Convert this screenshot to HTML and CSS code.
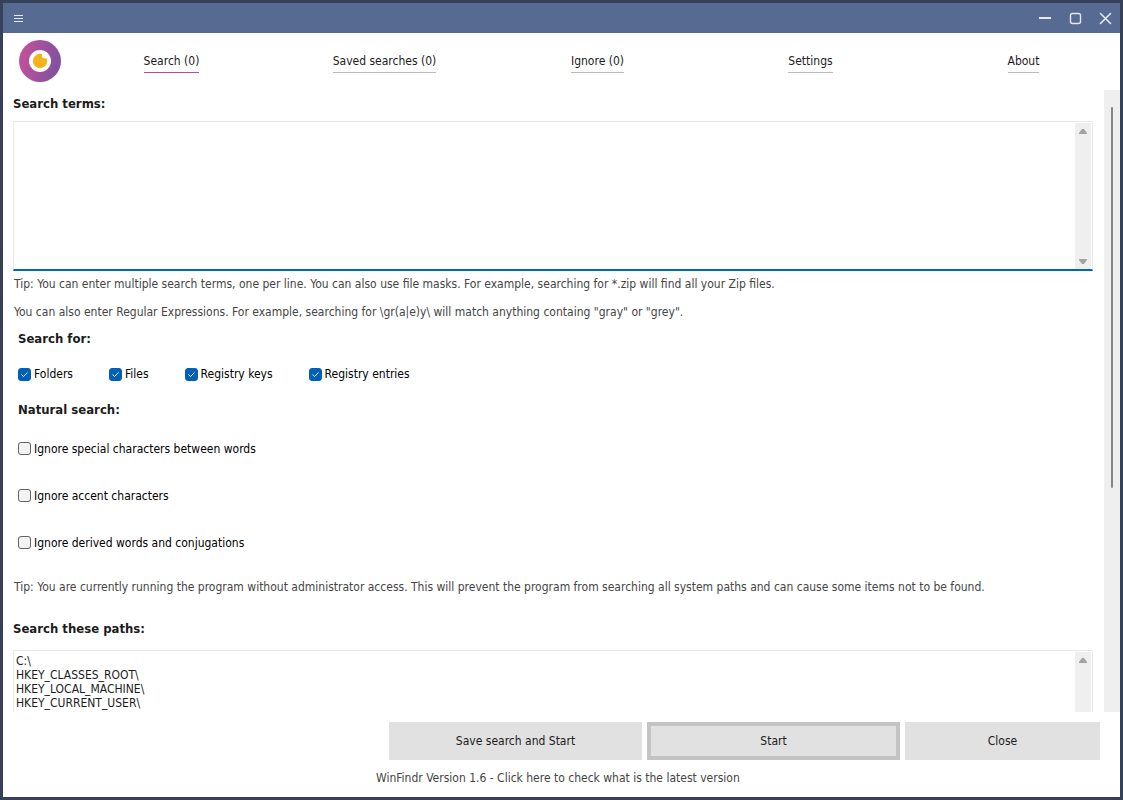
FILE: index.html
```html
<!DOCTYPE html>
<html lang="en">
<head>
<meta charset="utf-8">
<title>WinFindr</title>
<link rel="stylesheet" href="styles.css">
</head>
<body>
<div class="window">
  <div class="titlebar">
    <button class="title-button" aria-label="Menu"><svg width="30" height="30" viewBox="0 0 30 30"><path d="M11 12.5h9M11 15.5h9M11 18.5h9" stroke="#e4e8ef"/></svg></button>
    <div class="window-controls">
      <button class="title-button" aria-label="Minimize"><svg width="30" height="30" viewBox="0 0 30 30"><path d="M9 15h12" stroke="#e4e8ef" stroke-width="2"/></svg></button>
      <button class="title-button" aria-label="Maximize"><svg width="30" height="30" viewBox="0 0 30 30"><rect x="10.5" y="10.5" width="10" height="10" rx="2" fill="none" stroke="#e4e8ef" stroke-width="1.4"/></svg></button>
      <button class="title-button" aria-label="Close window"><svg width="30" height="30" viewBox="0 0 30 30"><path d="M10.500 10.500l10 10M20.500 10.500l-10 10" stroke="#e4e8ef" stroke-width="1.600" stroke-linecap="round"/></svg></button>
    </div>
  </div>
  <header class="header">
    <svg class="logo" width="42" height="42" viewBox="0 0 42 42">
      <defs><linearGradient id="ring" x1="0" y1="0.4" x2="1" y2="0.6"><stop offset="0" stop-color="#c5509b"/><stop offset="1" stop-color="#7b529f"/></linearGradient></defs>
      <circle cx="21" cy="21" r="21" fill="url(#ring)"/>
      <circle cx="21" cy="21" r="11" fill="#fff"/>
      <circle cx="21" cy="21" r="7.200" fill="#f3b41b"/>
      <circle cx="25.800" cy="15.600" r="2.900" fill="#fff"/>
    </svg>
    <nav class="tabs">
      <a class="tab active" href="#search">Search (0)</a>
      <a class="tab" href="#saved">Saved searches (0)</a>
      <a class="tab" href="#ignore">Ignore (0)</a>
      <a class="tab" href="#settings">Settings</a>
      <a class="tab" href="#about">About</a>
    </nav>
  </header>
  <div class="body">
    <main class="content">
      <label class="heading" for="terms">Search terms:</label>
      <div class="field focused">
        <textarea class="text" id="terms"></textarea>
        <div class="gutter"><svg width="10" height="7" viewBox="0 0 10 7"><path d="M1 6V5L4 1h2l3 4v1z" fill="#a3a3a3"/></svg><svg width="10" height="7" viewBox="0 0 10 7"><path d="M1 1v1l3 4h2l3-4V1z" fill="#a3a3a3"/></svg></div>
      </div>
      <p class="tip">Tip: You can enter multiple search terms, one per line. You can also use file masks. For example, searching for *.zip will find all your Zip files.</p>
      <p class="tip">You can also enter Regular Expressions. For example, searching for \gr(a|e)y\ will match anything containg "gray" or "grey".</p>
      <fieldset class="group">
        <legend class="heading">Search for:</legend>
        <div class="checks">
          <label class="check"><input type="checkbox" checked>Folders</label>
          <label class="check"><input type="checkbox" checked>Files</label>
          <label class="check"><input type="checkbox" checked>Registry keys</label>
          <label class="check"><input type="checkbox" checked>Registry entries</label>
        </div>
      </fieldset>
      <fieldset class="group">
        <legend class="heading">Natural search:</legend>
        <div class="checks stacked">
          <label class="check"><input type="checkbox">Ignore special characters between words</label>
          <label class="check"><input type="checkbox">Ignore accent characters</label>
          <label class="check"><input type="checkbox">Ignore derived words and conjugations</label>
        </div>
      </fieldset>
      <p class="tip notice">Tip: You are currently running the program without administrator access. This will prevent the program from searching all system paths and can cause some items not to be found.</p>
      <label class="heading" for="paths">Search these paths:</label>
      <div class="field paths">
        <textarea class="text" id="paths">C:\
HKEY_CLASSES_ROOT\
HKEY_LOCAL_MACHINE\
HKEY_CURRENT_USER\</textarea>
        <div class="gutter"><svg width="10" height="7" viewBox="0 0 10 7"><path d="M1 6V5L4 1h2l3 4v1z" fill="#a3a3a3"/></svg><svg width="10" height="7" viewBox="0 0 10 7"><path d="M1 1v1l3 4h2l3-4V1z" fill="#a3a3a3"/></svg></div>
      </div>
    </main>
    <div class="scrollbar"><div class="thumb"></div></div>
  </div>
  <footer class="footer">
    <div class="actions">
      <button class="action">Save search and Start</button>
      <button class="action default">Start</button>
      <button class="action">Close</button>
    </div>
    <a class="version" href="#version">WinFindr Version 1.6 - Click here to check what is the latest version</a>
  </footer>
</div>
</body>
</html>
```
FILE: styles.css
```css
* { box-sizing: border-box; }
body {
  margin: 0;
  font: 12px/14px "DejaVu Sans Condensed", "DejaVu Sans", sans-serif;
  font-stretch: condensed;
  color: #1c1c1c;
}
button, textarea { font: inherit; color: inherit; }
.window {
  display: flex;
  flex-direction: column;
  height: 100vh;
  border: 3px solid #364058;
  background: #fff;
}
.titlebar {
  display: flex;
  justify-content: space-between;
  height: 30px;
  background: #576a92;
}
.window-controls { display: flex; }
.title-button { width: 30px; height: 30px; padding: 0; border: 0; background: none; }
.title-button svg { display: block; }
.header { display: flex; align-items: center; height: 57px; padding-bottom: 2px; overflow: hidden; }
.logo { flex: none; margin: 0 4px 0 16px; }
.tabs {
  display: grid;
  flex: 1;
  grid-template-columns: repeat(5, 1fr);
  justify-items: center;
  margin-right: -10px;
}
.tab {
  padding: 1px 0 4px;
  border-bottom: 1px solid #bcbcbc;
  color: inherit;
  text-decoration: none;
  margin-top: 4px;
}
.tab.active { border-bottom-color: #a9519f; }
.body { display: flex; flex: 1; min-height: 0; }
.content { flex: 1; min-width: 0; padding: 7px 11px 0 10px; overflow: hidden; }
.heading { display: block; padding: 0; font: bold 13px/14px "DejaVu Sans Condensed", "DejaVu Sans", sans-serif; }
.field { display: flex; height: 150px; margin-top: 10px; padding: 1px; border: 1px solid #e8e8e8; }
.field.focused { padding-bottom: 0; border-bottom: 2px solid #0067c0; }
.field.paths { margin-top: 14px; }
.text { flex: 1; min-width: 0; padding: 2px 1px; border: 0; outline: 0; resize: none; overflow: hidden; background: none; }
.gutter {
  display: flex;
  flex-direction: column;
  justify-content: space-between;
  align-items: center;
  width: 16px;
  padding: 5px 0 4px;
  background: #efefef;
}
.tip { margin: 0 0 13px; padding-left: 1px; color: #454545; }
.field + .tip { margin: 6px 0 14px; }
.group { margin: 0 0 0 5px; padding: 0; border: 0; }
.checks { display: flex; flex-wrap: wrap; gap: 36px; padding: 21px 0 22px; }
.checks.stacked { flex-direction: column; gap: 33px; padding: 25px 0 30px; }
.check { display: flex; align-items: center; gap: 3px; color: #000; }
.stacked .check { align-items: flex-start; }
.check input {
  appearance: none;
  width: 13px;
  height: 13px;
  margin: 0;
  border: 1px solid #626262;
  border-radius: 3px;
  background: #f3f3f3;
}
.check input:checked {
  border-color: #005fb8;
  background: #005fb8 url("data:image/svg+xml,%3Csvg xmlns='http://www.w3.org/2000/svg' viewBox='0 0 11 11'%3E%3Cpath d='M2.500 5.500l2 2 4-4' fill='none' stroke='white'/%3E%3C/svg%3E");
}
.notice { margin-bottom: 28px; }
.scrollbar { width: 16px; padding-top: 17px; background: #efefef; }
.thumb { width: 2px; height: 63%; margin-left: 7px; border-radius: 1px; background: #868686; }
.footer { padding: 10px 20px 12px 386px; }
.actions { display: grid; grid-template-columns: 253fr 253fr 195fr; gap: 5px; }
.action { height: 38px; padding: 0; border: 0; background: #e1e1e1; }
.action.default { border: 4px solid #c3c3c3; }
.version { display: block; margin: 11px 0 0 -13px; color: #454545; text-decoration: none; }
```
